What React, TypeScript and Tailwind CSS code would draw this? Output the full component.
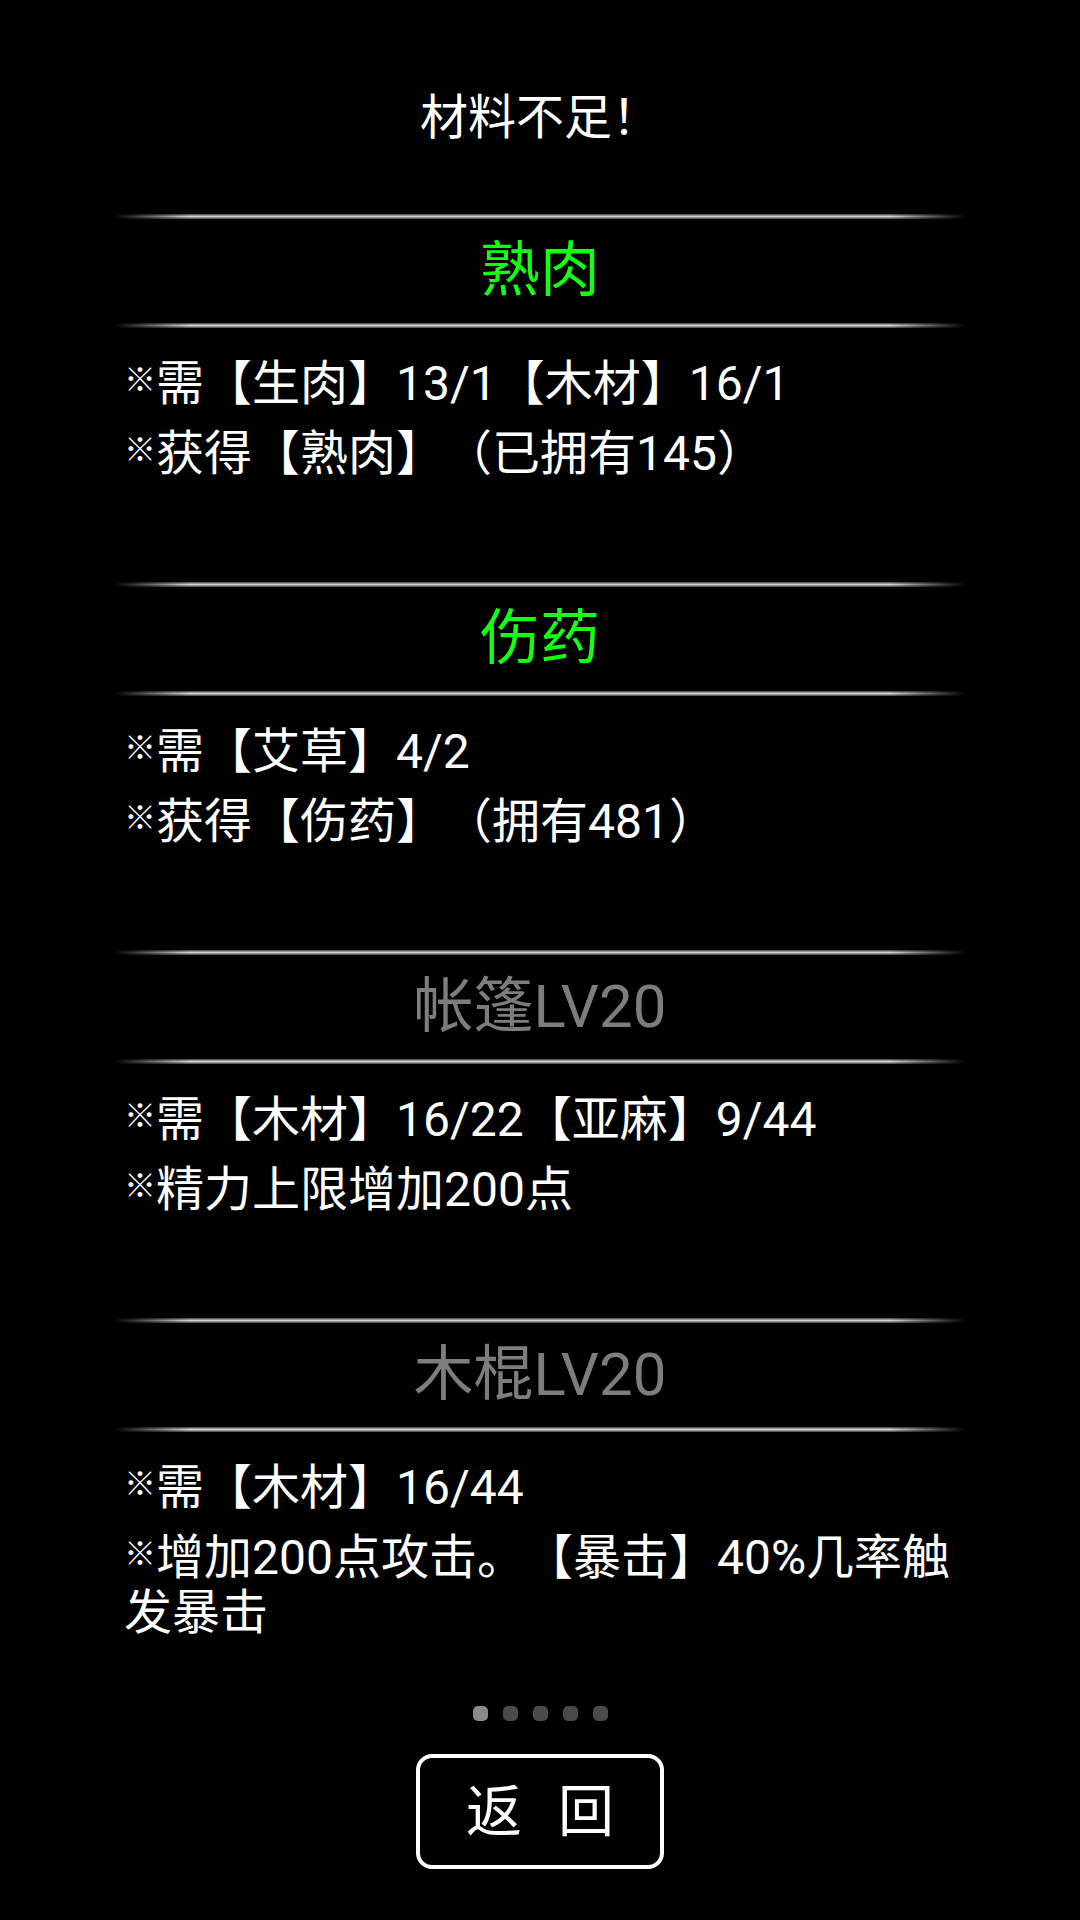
const FONT = "font-['Roboto','Noto_Sans_CJK_SC',sans-serif] [text-spacing-trim:space-all]";

interface Recipe {
  name: string;
  ready: boolean;
  lines: string[];
}

const recipes: Recipe[] = [
  {
    name: "熟肉",
    ready: true,
    lines: ["需【生肉】13/1【木材】16/1", "获得【熟肉】（已拥有145）"],
  },
  {
    name: "伤药",
    ready: true,
    lines: ["需【艾草】4/2", "获得【伤药】（拥有481）"],
  },
  {
    name: "帐篷LV20",
    ready: false,
    lines: ["需【木材】16/22【亚麻】9/44", "精力上限增加200点"],
  },
  {
    name: "木棍LV20",
    ready: false,
    lines: ["需【木材】16/44", "增加200点攻击。【暴击】40%几率触发暴击"],
  },
];

function Divider() {
  return (
    <div className="relative h-[5px] w-full [mask-image:linear-gradient(to_right,transparent,black_9%,black_91%,transparent)]">
      <div className="h-full w-full bg-[linear-gradient(to_bottom,#3a3a3a,#d6d6d6_50%,#3a3a3a)]" />
    </div>
  );
}

function RecipeCard({ recipe }: { recipe: Recipe }) {
  return (
    <div className="flex w-full flex-col">
      <Divider />
      <div
        className={`flex h-[104px] items-center justify-center text-[60px] leading-none ${
          recipe.ready ? "text-[#14ff14]" : "text-[#7d7d7d]"
        }`}
      >
        {recipe.name}
      </div>
      <Divider />
      <div className="flex h-[254px] flex-col gap-[15px] px-[10px] pt-[28px]">
        {recipe.lines.map((line) => (
          <p key={line} className="text-[48px] leading-[55px] text-white">
            <span className="relative -top-[9px] text-[32px] leading-none">※</span>
            {line}
          </p>
        ))}
      </div>
    </div>
  );
}

export default function App() {
  return (
    <div className={`flex h-[1920px] w-[1080px] flex-col items-center bg-black ${FONT}`}>
      <div className="mt-[88px] h-[60px] text-[48px] leading-[60px] text-white">材料不足！</div>

      <div className="mt-[66px] flex w-[852px] flex-col">
        {recipes.map((r) => (
          <RecipeCard key={r.name} recipe={r} />
        ))}
      </div>

      <div className="mt-[20px] flex gap-[15px]">
        {[0, 1, 2, 3, 4].map((i) => (
          <span
            key={i}
            className={`h-[15px] w-[15px] rounded-[5px] ${i === 0 ? "bg-[#8a8a8a]" : "bg-[#4a4a4a]"}`}
          />
        ))}
      </div>

      <button className="mt-[33px] flex h-[115px] w-[248px] items-center justify-center gap-[36px] rounded-[16px] border-[4px] border-white text-[56px] leading-none text-white">
        <span>返</span>
        <span>回</span>
      </button>
    </div>
  );
}
